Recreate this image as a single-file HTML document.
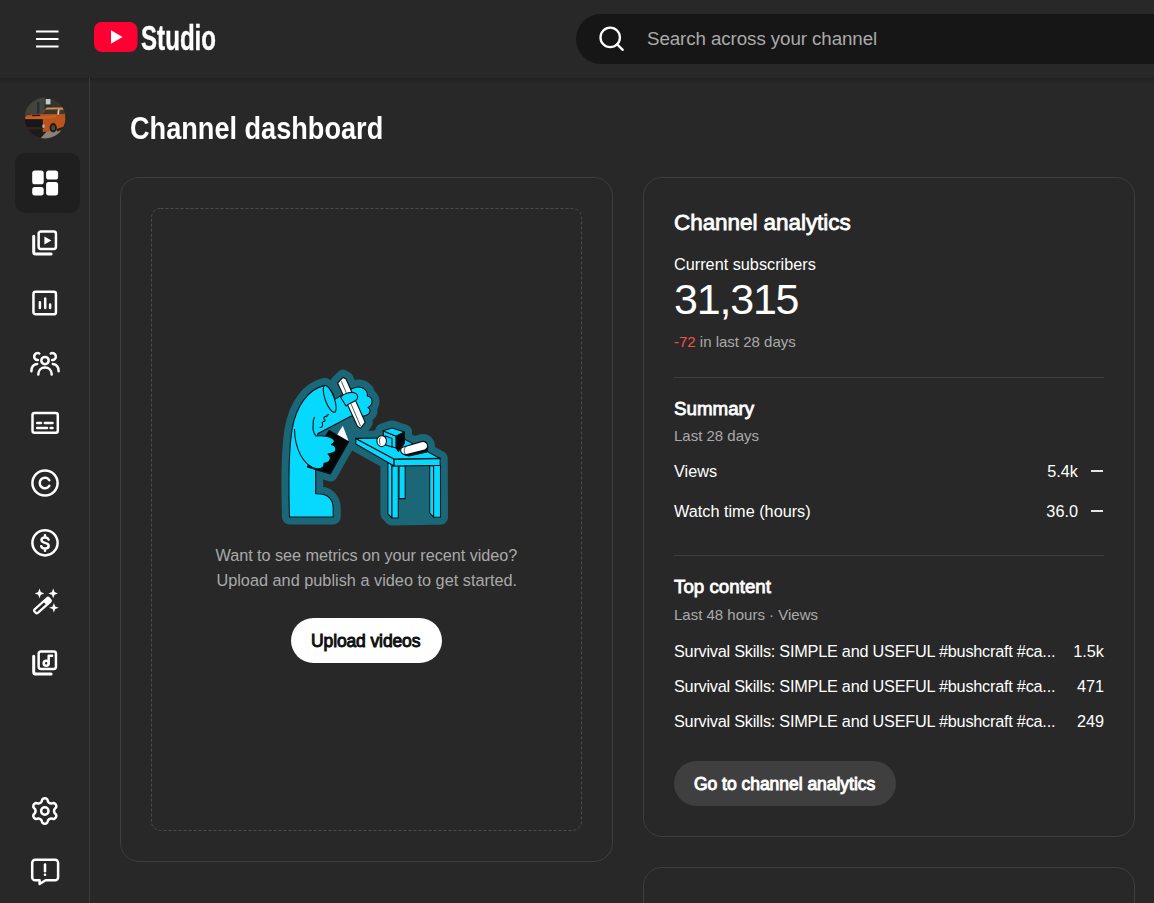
<!DOCTYPE html>
<html lang="en">
<head>
<meta charset="utf-8">
<title>Channel dashboard - YouTube Studio</title>
<style>
*{box-sizing:border-box;margin:0;padding:0}
html,body{width:1154px;height:903px;overflow:hidden;background:#282828}
body{font-family:"Liberation Sans",Arial,sans-serif;color:#fff;position:relative}
.abs{position:absolute}
.t{position:absolute;white-space:nowrap;line-height:1}
#header{position:absolute;left:0;top:0;width:1154px;height:78px;background:#282828;z-index:5}
#hshadow{position:absolute;left:0;top:78px;width:1154px;height:6px;background:linear-gradient(#212121,#282828);z-index:3}
#side{z-index:4;position:absolute;left:0;top:78px;width:90px;height:825px;border-right:1px solid #3d3d3d}
#search{position:absolute;left:576px;top:14px;width:640px;height:50px;border-radius:25px;background:#161616}
.card{position:absolute;border:1px solid #3e3e3e;border-radius:19px}
.hr{position:absolute;height:1px;background:#3e3e3e}
.ico{position:absolute;width:30px;height:30px}
.ico svg{width:30px;height:30px;display:block}
.gray{color:#aaa}
.med{font-weight:400!important;-webkit-text-stroke:.8px currentColor}
.med.b{-webkit-text-stroke:.95px currentColor}
</style>
</head>
<body>
<!-- HEADER -->
<div id="header">
  <svg class="abs" style="left:36px;top:30px" width="23" height="18" viewBox="0 0 23 18"><path d="M0 1.500h22.500M0 9h22.500M0 16.500h22.500" stroke="#fff" stroke-width="2.200" fill="none"/></svg>
  <svg class="abs" style="left:94px;top:22px" width="44" height="30" viewBox="0 0 44 30"><rect x="0" y="0" width="43.5" height="30" rx="8" ry="8" fill="#ff0033"/><path d="M17 8.3 28.6 15 17 21.7z" fill="#fff"/></svg>
  <div class="t" id="studio" style="left:141.200px;top:20.600px;font-size:35.400px;font-weight:700;transform:scaleX(.682);transform-origin:0 0;-webkit-text-stroke:.4px #fff">Studio</div>
  <div id="search"></div>
  <svg class="abs" style="left:596px;top:24px" width="30" height="30" viewBox="0 0 30 30"><circle cx="14.200" cy="13.400" r="9.700" stroke="#fff" stroke-width="2.300" fill="none"/><path d="M21.200 20.400l5.500 5.500" stroke="#fff" stroke-width="2.3" stroke-linecap="round"/></svg>
  <div class="t" style="left:647px;top:30px;font-size:18.75px;letter-spacing:-.09px;color:#aaa">Search across your channel</div>
</div>
<div id="hshadow"></div>


<!-- SIDEBAR -->
<div id="side">
  <!-- avatar -->
  <svg class="abs" style="left:24px;top:19px" width="42" height="42" viewBox="-1 -1 42 42">
    <defs><clipPath id="avc"><circle cx="20" cy="20" r="20.400"/></clipPath><filter id="avb" x="-10%" y="-10%" width="120%" height="120%"><feGaussianBlur stdDeviation=".55"/></filter></defs>
    <g clip-path="url(#avc)"><g filter="url(#avb)">
      <rect x="-2" y="-2" width="44" height="44" fill="#2b2d2a"/>
      <path d="M-2 4 L14 -2 L20 -2 L19 15 L-2 17 Z" fill="#41443e"/>
      <path d="M26 -2 L42 -2 L42 14 L27 10 Z" fill="#34362f"/>
      <rect x="20.700" y="1" width="4.800" height="5.400" fill="#c3c8ca"/>
      <rect x="12" y="4" width="2.500" height="11" fill="#2c2e2b"/>
      <path d="M-2 31 L42 29 L42 42 L-2 42 Z" fill="#1c1c1b"/>
      <path d="M14 42 L22 33 L42 29 L42 42 Z" fill="#8b8374"/>
      <path d="M16.600 15.800 L21 10 L38.500 9.800 L40.500 16 L41 30 L34 32.500 L17.700 34 L17.700 21 L.5 21.300 L.5 17.500 L8 16.300 Z" fill="#bb531d"/>
      <path d="M21.600 9.600 L38.200 9.600 L38.800 11.400 L20.600 11.600 Z" fill="#c98d58"/>
      <path d="M20.300 11.800 L33 11.600 L32.500 16 L16.800 16.200 Z" fill="#343532"/>
      <path d="M32.900 11.600 L34.500 11.600 L33.900 16.500 L32.300 16.500 Z" fill="#dccbb0"/>
      <path d="M34.800 12 L39 12 L40 16 L34.400 16.200 Z" fill="#3a3a36"/>
      <path d="M7.200 16.800 L15.500 16.400 L15 18 L7 18.200 Z" fill="#231a14"/>
      <path d="M.5 19 L17 18.400 L31 17.200 L31 19.500 L17.700 21.300 L.5 21.300 Z" fill="#c75f25"/>
      <path d="M-1 21.300 L17.700 21.300 L17.700 29.500 L1 29 Z" fill="#17191a"/>
      <path d="M1 29 L17.700 29.500 L19 31 L3 31.500 Z" fill="#3a2418"/>
      <rect x="17.400" y="26.600" width="2.300" height="3" fill="#b9b5a8"/>
      <ellipse cx="28.200" cy="29.800" rx="3.600" ry="4.700" fill="#1d1b1a"/>
      <ellipse cx="28.200" cy="29.800" rx="1.900" ry="2.700" fill="#4b4a47"/>
      <path d="M31.500 31 L40.500 28 L41 30.500 L32 33.500 Z" fill="#2a211c"/>
    </g></g>
  </svg>
  <div class="abs" style="left:15px;top:75px;width:65px;height:60px;border-radius:10px;background:#1f1f1f"></div>
  <!-- dashboard -->
  <svg class="ico" style="left:30px;top:90px" viewBox="0 0 30 30"><g fill="#fff"><rect x="2.2" y="2.6" width="11.5" height="13.7" rx="2.6"/><rect x="16.1" y="2.6" width="12" height="8.9" rx="2.6"/><rect x="2.2" y="19" width="11.5" height="8.4" rx="2.6"/><rect x="16.1" y="14.1" width="12" height="13.3" rx="2.6"/></g></svg>
  <!-- content -->
  <svg class="ico" style="left:30px;top:150px" viewBox="0 0 30 30"><g fill="none" stroke="#fff" stroke-width="2.500" stroke-linejoin="round" stroke-linecap="round"><rect x="8.650" y="3.450" width="17.300" height="17.600" rx="2.200"/><path d="M3.700 8.300v15.400a2.400 2.400 0 0 0 2.400 2.400h15" stroke-width="3"/></g><path d="M14.4 8.4l7 4-7 4z" fill="#fff"/></svg>
  <!-- analytics -->
  <svg class="ico" style="left:30px;top:210px" viewBox="0 0 30 30"><g fill="none" stroke="#fff" stroke-width="2.500" stroke-linecap="round"><rect x="3.450" y="3.850" width="22.500" height="22.500" rx="2.200"/><path d="M9.900 14.200v5.800M15.200 10.500v9.500M20.100 16.600v3.400"/></g></svg>
  <!-- community -->
  <svg class="ico" style="left:30px;top:270px" viewBox="0 0 30 30"><g fill="none" stroke="#fff" stroke-width="2.500" stroke-linecap="round"><circle cx="15" cy="12.600" r="3.700"/><path d="M8.3 26.6c0-4.6 3-7.2 6.7-7.2s6.700 2.600 6.700 7.200"/><path d="M9.300 5.500a3.500 3.500 0 1 0-1.400 6.600"/><path d="M20.700 5.500a3.500 3.500 0 1 1 1.400 6.600"/><path d="M1.400 23.200c0-4.200 2.200-6.800 5.800-7.200"/><path d="M28.600 23.200c0-4.200-2.200-6.800-5.800-7.200"/></g></svg>
  <!-- subtitles -->
  <svg class="ico" style="left:30px;top:330px" viewBox="0 0 30 30"><g fill="none" stroke="#fff" stroke-width="2.500" stroke-linecap="round"><rect x="2.500" y="5" width="25.300" height="19.800" rx="2"/><path d="M7.200 15.100h3.800M14.800 15.100h7.700M7.200 20h9.800M20.600 20h1.900"/></g></svg>
  <!-- copyright -->
  <svg class="ico" style="left:30px;top:390px" viewBox="0 0 30 30"><g fill="none" stroke="#fff" stroke-width="2.500" stroke-linecap="round"><circle cx="15" cy="15" r="12.600"/><path d="M19.300 12.200a5.200 5.200 0 1 0 0 5.600"/></g></svg>
  <!-- earn -->
  <svg class="ico" style="left:30px;top:450px" viewBox="0 0 30 30"><g fill="none" stroke="#fff" stroke-width="2.500" stroke-linecap="round"><circle cx="15" cy="14.800" r="12.600"/><path d="M18.600 11.600c-.6-1.500-1.900-2.200-3.600-2.200-2 0-3.500 1-3.500 2.700 0 1.700 1.400 2.300 3.500 2.800 2.200.5 3.700 1.100 3.700 2.900 0 1.700-1.500 2.800-3.700 2.800-1.900 0-3.300-.8-3.800-2.400M15 7.200v2M15 20.800v2"/></g></svg>
  <!-- customisation -->
  <svg class="ico" style="left:30px;top:509px" viewBox="0 0 30 30"><g fill="none" stroke="#fff" stroke-width="2.200" stroke-linejoin="round"><rect x="-9.800" y="-2.400" width="19.600" height="4.800" rx="1.500" transform="translate(12.400 18.600) rotate(-42)"/></g><rect x="3.400" y="-2.400" width="6.400" height="4.800" rx="1.200" transform="translate(12.400 18.600) rotate(-42)" fill="#fff"/><g fill="#fff"><path d="M9.500 1.600l1.300 3.500 3.500 1.300-3.500 1.300-1.300 3.500-1.300-3.500-3.500-1.300 3.500-1.300z"/><path d="M23.200 1.600l1.300 3.500 3.500 1.300-3.500 1.300-1.300 3.500-1.300-3.500-3.500-1.300 3.500-1.300z"/><path d="M23.900 16l1.300 3.500 3.500 1.300-3.500 1.300-1.300 3.500-1.300-3.500-3.500-1.300 3.500-1.300z"/></g></svg>
  <!-- audio library -->
  <svg class="ico" style="left:30px;top:569.800px" viewBox="0 0 30 30"><g fill="none" stroke="#fff" stroke-width="2.500" stroke-linejoin="round" stroke-linecap="round"><rect x="8.650" y="3.450" width="17.300" height="17.600" rx="2.200"/><path d="M3.700 8.300v15.400a2.400 2.400 0 0 0 2.400 2.400h15" stroke-width="3"/><circle cx="16.200" cy="15.300" r="2.500"/><path d="M18.700 15.300V7.700h3.400"/></g></svg>
  <!-- settings -->
  <svg class="ico" style="left:30px;top:718px" viewBox="0 0 30 30"><g fill="none" stroke="#fff" stroke-width="2.500" stroke-linejoin="round"><path d="M24.05 15.00 L24.09 15.49 L24.21 15.99 L24.41 16.52 L24.71 17.11 L25.43 17.85 L26.08 18.67 L26.26 19.40 L26.26 20.10 L26.11 20.76 L25.84 21.38 L25.45 21.92 L24.95 22.37 L24.34 22.72 L23.62 22.94 L22.58 22.78 L21.58 22.53 L20.92 22.56 L20.36 22.65 L19.87 22.80 L19.43 23.01 L19.02 23.29 L18.65 23.64 L18.29 24.08 L17.93 24.64 L17.65 25.63 L17.27 26.61 L16.72 27.12 L16.11 27.47 L15.46 27.68 L14.80 27.75 L14.14 27.68 L13.49 27.47 L12.88 27.12 L12.33 26.61 L11.95 25.63 L11.67 24.64 L11.31 24.08 L10.95 23.64 L10.58 23.29 L10.18 23.01 L9.73 22.80 L9.24 22.65 L8.68 22.56 L8.02 22.53 L7.02 22.78 L5.98 22.94 L5.26 22.72 L4.65 22.37 L4.15 21.92 L3.76 21.38 L3.49 20.76 L3.34 20.10 L3.34 19.40 L3.52 18.67 L4.17 17.85 L4.89 17.11 L5.19 16.52 L5.39 15.99 L5.51 15.49 L5.55 15.00 L5.51 14.51 L5.39 14.01 L5.19 13.48 L4.89 12.89 L4.17 12.15 L3.52 11.33 L3.34 10.60 L3.34 9.90 L3.49 9.24 L3.76 8.62 L4.15 8.08 L4.65 7.63 L5.26 7.28 L5.98 7.06 L7.02 7.22 L8.02 7.47 L8.68 7.44 L9.24 7.35 L9.73 7.20 L10.17 6.99 L10.58 6.71 L10.95 6.36 L11.31 5.92 L11.67 5.36 L11.95 4.37 L12.33 3.39 L12.88 2.88 L13.49 2.53 L14.14 2.32 L14.80 2.25 L15.46 2.32 L16.11 2.53 L16.72 2.88 L17.27 3.39 L17.65 4.37 L17.93 5.36 L18.29 5.92 L18.65 6.36 L19.02 6.71 L19.43 6.99 L19.87 7.20 L20.36 7.35 L20.92 7.44 L21.58 7.47 L22.58 7.22 L23.62 7.06 L24.34 7.28 L24.95 7.63 L25.45 8.08 L25.84 8.62 L26.11 9.24 L26.26 9.90 L26.26 10.60 L26.08 11.33 L25.43 12.15 L24.71 12.89 L24.41 13.48 L24.21 14.01 L24.09 14.51Z"/><circle cx="14.800" cy="15" r="3.700"/></g></svg>
  <!-- feedback -->
  <svg class="ico" style="left:30px;top:778px" viewBox="0 0 30 30"><g fill="none" stroke="#fff" stroke-width="2.500" stroke-linejoin="round" stroke-linecap="round"><path d="M5.200 3.700h19.900a3 3 0 0 1 3 3v14.600a3 3 0 0 1-3 3H15.600l-6 3.700v-3.700H5.200a3 3 0 0 1-3-3V6.700a3 3 0 0 1 3-3z"/><path d="M15 8.600v6.600"/></g><circle cx="15" cy="18.700" r="1.300" fill="#fff"/></svg>
</div>

<!-- MAIN -->
<div class="t" id="title" style="left:130px;top:112.5px;font-size:31px;font-weight:700;transform:scaleX(.875);transform-origin:0 0">Channel dashboard</div>

<div class="card" style="left:120px;top:177px;width:493px;height:685px"></div>
<svg class="abs" id="dashbox" style="left:151px;top:208px" width="431" height="623" viewBox="0 0 431 623"><rect x=".5" y=".5" width="430" height="622" rx="9" fill="none" stroke="#4c4c4c" stroke-width="1" stroke-dasharray="3 2"/></svg>

<div class="card" style="left:643px;top:177px;width:492px;height:660px"></div>
<div class="card" style="left:643px;top:867px;width:492px;height:200px"></div>

<!-- RIGHT CARD TEXT -->
<div class="t med" id="r1" style="left:674px;top:212px;font-size:22.5px;font-weight:700;letter-spacing:-.06px">Channel analytics</div>
<div class="t" id="r2" style="left:674px;top:256px;font-size:16.25px">Current subscribers</div>
<div class="t" id="r3" style="left:674px;top:278px;font-size:43px;letter-spacing:-1.2px">31,315</div>
<div class="t gray" id="r4" style="left:674px;top:334px;font-size:15px"><span style="color:#ff4e45">-72</span> in last 28 days</div>
<div class="hr" style="left:674px;top:377px;width:430px"></div>
<div class="t med" id="r5" style="left:674px;top:400px;font-size:18.75px;font-weight:700">Summary</div>
<div class="t gray" id="r6" style="left:674px;top:427.500px;font-size:15px">Last 28 days</div>
<div class="t" id="r7" style="left:674px;top:463px;font-size:16.25px">Views</div>
<div class="t" id="r7v" style="right:76px;top:463px;font-size:16.25px">5.4k</div>
<div class="abs" style="left:1091px;top:470px;width:11.5px;height:2px;background:#e4e4e4"></div>
<div class="t" id="r8" style="left:674px;top:503px;font-size:16.25px">Watch time (hours)</div>
<div class="t" id="r8v" style="right:76px;top:503px;font-size:16.25px">36.0</div>
<div class="abs" style="left:1091px;top:510px;width:11.5px;height:2px;background:#e4e4e4"></div>
<div class="hr" style="left:674px;top:555px;width:430px"></div>
<div class="t med" id="r9" style="left:674px;top:578px;font-size:18.75px;font-weight:700">Top content</div>
<div class="t gray" id="r10" style="left:674px;top:607px;font-size:15px">Last 48 hours · Views</div>
<div class="t" id="r11" style="left:674px;top:643px;font-size:16.25px;letter-spacing:-.23px">Survival Skills: SIMPLE and USEFUL #bushcraft #ca...</div>
<div class="t" id="r11v" style="right:50px;top:643px;font-size:16.25px">1.5k</div>
<div class="t" id="r12" style="left:674px;top:678px;font-size:16.25px;letter-spacing:-.23px">Survival Skills: SIMPLE and USEFUL #bushcraft #ca...</div>
<div class="t" id="r12v" style="right:50px;top:678px;font-size:16.25px">471</div>
<div class="t" id="r13" style="left:674px;top:713px;font-size:16.25px;letter-spacing:-.23px">Survival Skills: SIMPLE and USEFUL #bushcraft #ca...</div>
<div class="t" id="r13v" style="right:50px;top:713px;font-size:16.25px">249</div>
<div class="abs" style="left:674px;top:761px;width:222px;height:45px;border-radius:22.5px;background:#3f3f3f"></div>
<div class="t med b" id="r14" style="left:694px;top:776px;font-size:17.5px;font-weight:700;letter-spacing:-.03px">Go to channel analytics</div>

<!-- LEFT CARD CONTENT -->
<svg class="abs" id="illo" style="left:270px;top:360px" width="190" height="175" viewBox="270 360 190 175">
<g fill="#1b6778" stroke="#1b6778" stroke-width="15" stroke-linejoin="round" stroke-linecap="round">
<path d="M289.5 517 L333.2 517 L333.2 508 C333.2 500 328 494.5 321 494 L315.7 493.8 L315.7 466 L317.6 433.8 L351.3 416 C356 416.8 360 417 363 416 C369 415.500 372.500 410.500 368 407.500 C373.500 405 373.500 397 367.200 396 C368.500 390.500 362.500 386 356.400 387.300 C352 388.200 348.500 390.500 346.200 392.400 L334.800 399.400 C333.500 393 329.500 387 324.600 385.400 C309 389 296 405 292 430 C288.500 452 288.500 485 289.500 517 Z"/>
<path d="M337.600 383 L343 377.300 L346 379 L365.200 422.300 L360.500 428.400 L357.400 426.300 Z"/>
<path d="M329 430.600 L348.800 441.400 L330.300 473.900 L307.400 466.900 Z"/>
<path d="M316 436 C322 435.500 329 436.500 332.500 438.500 C335.500 440.500 334.500 443 331.500 444.500 C336.500 446 337.500 450.500 333.500 452.500 C331.500 453.500 329.500 453.800 328 454 C331.500 456.500 331 461 327 462.500 C326 463 325 463.200 324 463.200 C324.500 467 321 469.500 316 468.500 C311 467.500 305 463 300.500 455 C297 448 294.500 438 294 428.700 C296 420 305 418 317.600 433.800 Z"/>
<path d="M355.800 438.400 L401.900 437.700 L440.200 458.400 L440.500 517.200 L433.600 517.200 L392 518 L387.900 513.800 L387.900 462 L355.800 443.900 Z"/>
<path d="M383 430.800 L392 428 L404.500 432.100 L396.200 436.300 Z"/>
<path d="M383 430.800 L396.200 436.300 L396.200 448 L385 444.600 Z"/>
<path d="M396.200 436.300 L404.500 432.100 L404.500 443.200 L398.300 451.500 L396.200 448 Z"/>
<path d="M402.500 447.300 L421.500 441.600 C427.500 440.300 430 447.500 424.600 450.100 L406.500 454.600 C401 455.300 398.800 449.500 402.500 447.300 Z"/>
<ellipse cx="381.700" cy="441.100" rx="4.800" ry="5.500"/>
<path d="M340 420 L360 420 L358 440 L345 440 Z"/>
</g>
<g stroke="#04141a" stroke-width="1.100" stroke-linejoin="round">
<path d="M289.5 517 L333.2 517 L333.2 508 C333.2 500 328 494.5 321 494 L315.7 493.8 L315.7 466 L317.6 433.8 L351.3 416 C356 416.8 360 417 363 416 C369 415.500 372.500 410.500 368 407.500 C373.500 405 373.500 397 367.200 396 C368.500 390.500 362.500 386 356.400 387.300 C352 388.200 348.500 390.500 346.200 392.400 L334.800 399.400 C333.500 393 329.500 387 324.600 385.400 C309 389 296 405 292 430 C288.500 452 288.500 485 289.500 517 Z" fill="#06d9fd"/>
<path d="M329 414.500 c-1.500 .2-2.500 1-2.200 2.200 c-1.800-.8-3.200 .2-3 1.600 c.2 1.200 1.500 1 1.300 2.300 c-.2 1.300-2.300 .6-2.800 2 c-.5 1.500 .8 2.200 .2 3.500 c-.5 1-2 1.500-2.800 1.200 M313.200 425 c-.3-3 .3-6 1.300-8" fill="none" stroke-width="1.100"/>
<ellipse cx="329.700" cy="398.900" rx="4.500" ry="14.200" transform="rotate(-20 329.700 398.900)" fill="#06d9fd"/>
<path d="M337.600 383 L343 377.300 L346 379 L365.200 422.300 L360.500 428.400 L357.400 426.300 Z" fill="#fff"/>
<path d="M341.300 381.200 L360.600 426.300" fill="none" stroke-width=".7"/>
<path d="M340.500 397 C344 393.500 351 391.300 355 393 C358.500 394.600 358.600 398.600 355.500 400.500 C352 402.600 349 403.500 346 406 Z" fill="#06d9fd"/>
<path d="M329 430.600 L348.800 441.400 L330.300 473.900 L307.400 466.900 Z" fill="#060606"/>
<path d="M342.800 425.800 L348.600 441 L337.200 434.400 Z" fill="#fff" stroke="none"/>
<path d="M316 436 C322 435.500 329 436.500 332.500 438.500 C335.500 440.500 334.500 443 331.500 444.500 C336.500 446 337.500 450.500 333.500 452.500 C331.500 453.500 329.500 453.800 328 454 C331.500 456.500 331 461 327 462.500 C326 463 325 463.200 324 463.200 C324.500 467 321 469.500 316 468.500 C311 467.500 305 463 300.500 455 C297 448 294.500 438 294 428.700 C296 420 305 418 317.600 433.800 Z" fill="#06d9fd" stroke="none"/>
<path d="M313.200 425 C312.500 429 313.500 433 316 436 C322 435.500 329 436.500 332.500 438.500 C335.500 440.500 334.500 443 331.500 444.500 C336.500 446 337.500 450.500 333.500 452.500 C331.500 453.500 329.500 453.800 328 454 C331.500 456.500 331 461 327 462.500 C326 463 325 463.200 324 463.200 C324.500 467 321 469.500 316 468.500 C311 467.500 305 463 300.500 455 C297 448 294.500 438 294.500 429" fill="none"/>
<path d="M399 466 L405.200 466 L405.200 498.600 L399 498.600 Z" fill="#06d9fd"/>
<path d="M387.900 462.400 L392 464.800 L392 518 L387.900 513.800 Z" fill="#06d9fd"/>
<path d="M392 466 L398.300 466 L398.300 518 L392 518 Z" fill="#06d9fd"/>
<path d="M429.700 465.600 L433.600 465.600 L433.600 517.200 L429.700 513 Z" fill="#06d9fd"/>
<path d="M433.600 465.500 L440.500 465.400 L440.500 517.200 L433.600 517.200 Z" fill="#06d9fd"/>
<path d="M355.800 438.400 L394.100 459.100 L394.100 466 L355.800 443.900 Z" fill="#06d9fd"/>
<path d="M394.100 459.100 L440.200 458.400 L440.200 465.400 L394.100 466 Z" fill="#06d9fd"/>
<path d="M355.800 438.400 L394.100 459.100 L440.200 458.400 L401.900 437.700 Z" fill="#06d9fd"/>
<path d="M404 452 L424.600 449 L428 447.500 L427 452 L409 456 L405 455 Z" fill="#0a0a0a"/>
<path d="M383 430.800 L396.200 436.300 L396.200 448 L385 444.600 Z" fill="#06d9fd"/>
<path d="M383 430.800 L392 428 L404.500 432.100 L396.200 436.300 Z" fill="#06d9fd"/>
<path d="M396.200 436.300 L404.500 432.100 L404.500 443.200 L398.300 451.500 L396.200 448 Z" fill="#060606"/>
<path d="M385.500 436 L392 438.500 L392 447 L385.500 444.800 Z" fill="#06d9fd"/>
<ellipse cx="381.700" cy="441.100" rx="4.800" ry="5.500" fill="#fff"/>
<path d="M380.300 437.500 c-1.200 2-1.200 5 0 7" fill="none" stroke-width=".7"/>
<path d="M402.500 447.300 L421.500 441.600 C427.500 440.300 430 447.500 424.600 450.100 L406.500 454.600 C401 455.300 398.800 449.500 402.500 447.300 Z" fill="#fff"/>
<path d="M405.500 447 c-1.800 2-1.800 5.500 .5 7.500" fill="none" stroke-width=".7"/>
</g>
</svg>
<div class="t gray" id="l1" style="left:215.500px;top:547px;font-size:16.25px;letter-spacing:-.05px">Want to see metrics on your recent video?</div>
<div class="t gray" id="l2" style="left:216.400px;top:572px;font-size:16.25px;letter-spacing:.02px">Upload and publish a video to get started.</div>
<div class="abs" style="left:291px;top:618px;width:151px;height:45px;border-radius:22.5px;background:#fff"></div>
<div class="t med b" id="l3" style="left:311px;top:633px;font-size:17.5px;font-weight:700;letter-spacing:-.12px;color:#0f0f0f">Upload videos</div>

</body>
</html>
